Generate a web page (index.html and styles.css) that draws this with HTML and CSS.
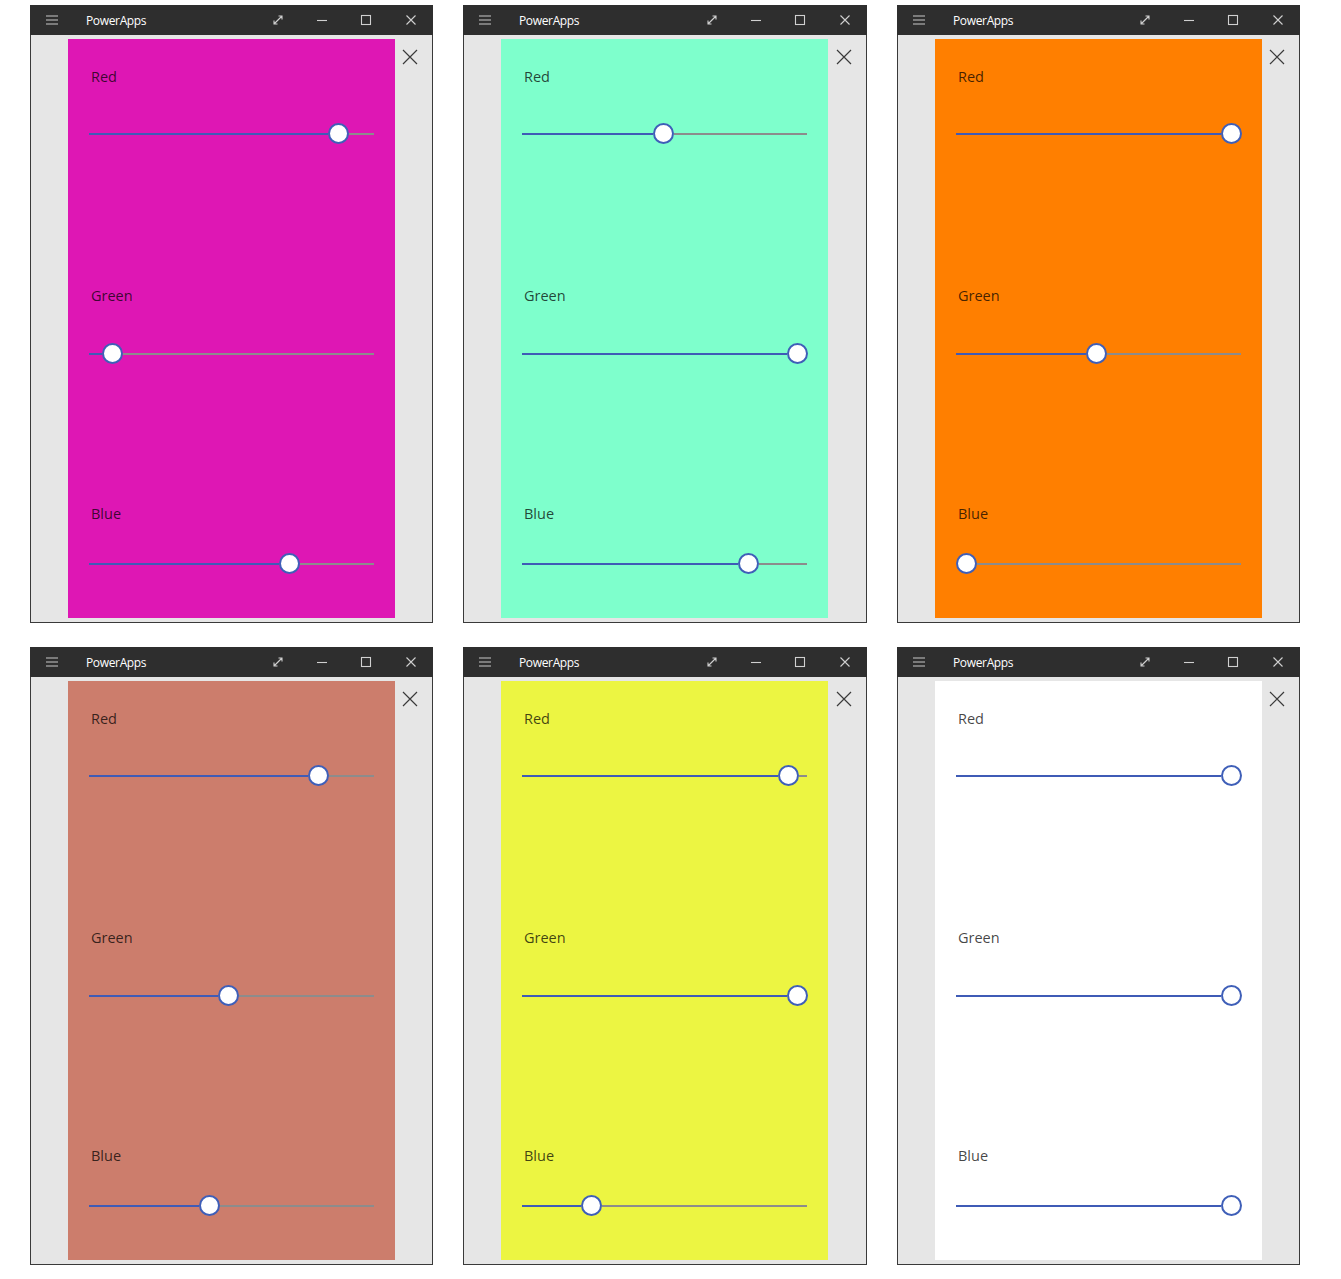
FILE: index.html
```html
<!DOCTYPE html>
<html>
<head>
<meta charset="utf-8">
<link rel="stylesheet" href="styles.css">
</head>
<body>
<div class="grid">

<div class="win">
  <div class="titlebar">
    <div class="tb-btn"><svg width="14" height="12" viewBox="0 0 14 12"><path d="M1 2h12M1 6h12M1 10h12" stroke="#c8c8c8" stroke-width="1.2"/></svg></div>
    <div class="tb-title">PowerApps</div>
    <div class="tb-spacer"></div>
    <div class="tb-btn"><svg width="12" height="12" viewBox="0 0 12 12"><path d="M2 10L10 2M6.5 2H10V5.5M2 6.5V10H5.5" stroke="#d0d0d0" stroke-width="1.1" fill="none"/></svg></div>
    <div class="tb-btn"><svg width="12" height="12" viewBox="0 0 12 12"><path d="M1 6.5h10" stroke="#d0d0d0" stroke-width="1.1"/></svg></div>
    <div class="tb-btn"><svg width="12" height="12" viewBox="0 0 12 12"><rect x="1.5" y="1.5" width="9" height="9" stroke="#d0d0d0" stroke-width="1.1" fill="none"/></svg></div>
    <div class="tb-btn"><svg width="12" height="12" viewBox="0 0 12 12"><path d="M1.5 1.5L10.5 10.5M10.5 1.5L1.5 10.5" stroke="#d0d0d0" stroke-width="1.1"/></svg></div>
  </div>
  <div class="content">
    <div class="panel c1">
      <div class="label l-red">Red</div>
      <div class="slider s-red"><span class="fill" style="width:239px"></span><span class="thumb"></span><span class="rest"></span></div>
      <div class="label l-green">Green</div>
      <div class="slider s-green"><span class="fill" style="width:13px"></span><span class="thumb"></span><span class="rest"></span></div>
      <div class="label l-blue">Blue</div>
      <div class="slider s-blue"><span class="fill" style="width:190px"></span><span class="thumb"></span><span class="rest"></span></div>
    </div>
    <div class="side"><svg width="16" height="16" viewBox="0 0 16 16"><path d="M1 1L15 15M15 1L1 15" stroke="#3a3a3a" stroke-width="1.2"/></svg></div>
  </div>
</div>

<div class="win">
  <div class="titlebar">
    <div class="tb-btn"><svg width="14" height="12" viewBox="0 0 14 12"><path d="M1 2h12M1 6h12M1 10h12" stroke="#c8c8c8" stroke-width="1.2"/></svg></div>
    <div class="tb-title">PowerApps</div>
    <div class="tb-spacer"></div>
    <div class="tb-btn"><svg width="12" height="12" viewBox="0 0 12 12"><path d="M2 10L10 2M6.5 2H10V5.5M2 6.5V10H5.5" stroke="#d0d0d0" stroke-width="1.1" fill="none"/></svg></div>
    <div class="tb-btn"><svg width="12" height="12" viewBox="0 0 12 12"><path d="M1 6.5h10" stroke="#d0d0d0" stroke-width="1.1"/></svg></div>
    <div class="tb-btn"><svg width="12" height="12" viewBox="0 0 12 12"><rect x="1.5" y="1.5" width="9" height="9" stroke="#d0d0d0" stroke-width="1.1" fill="none"/></svg></div>
    <div class="tb-btn"><svg width="12" height="12" viewBox="0 0 12 12"><path d="M1.5 1.5L10.5 10.5M10.5 1.5L1.5 10.5" stroke="#d0d0d0" stroke-width="1.1"/></svg></div>
  </div>
  <div class="content">
    <div class="panel c2">
      <div class="label l-red">Red</div>
      <div class="slider s-red"><span class="fill" style="width:131px"></span><span class="thumb"></span><span class="rest"></span></div>
      <div class="label l-green">Green</div>
      <div class="slider s-green"><span class="fill" style="width:265px"></span><span class="thumb"></span><span class="rest"></span></div>
      <div class="label l-blue">Blue</div>
      <div class="slider s-blue"><span class="fill" style="width:216px"></span><span class="thumb"></span><span class="rest"></span></div>
    </div>
    <div class="side"><svg width="16" height="16" viewBox="0 0 16 16"><path d="M1 1L15 15M15 1L1 15" stroke="#3a3a3a" stroke-width="1.2"/></svg></div>
  </div>
</div>

<div class="win">
  <div class="titlebar">
    <div class="tb-btn"><svg width="14" height="12" viewBox="0 0 14 12"><path d="M1 2h12M1 6h12M1 10h12" stroke="#c8c8c8" stroke-width="1.2"/></svg></div>
    <div class="tb-title">PowerApps</div>
    <div class="tb-spacer"></div>
    <div class="tb-btn"><svg width="12" height="12" viewBox="0 0 12 12"><path d="M2 10L10 2M6.5 2H10V5.5M2 6.5V10H5.5" stroke="#d0d0d0" stroke-width="1.1" fill="none"/></svg></div>
    <div class="tb-btn"><svg width="12" height="12" viewBox="0 0 12 12"><path d="M1 6.5h10" stroke="#d0d0d0" stroke-width="1.1"/></svg></div>
    <div class="tb-btn"><svg width="12" height="12" viewBox="0 0 12 12"><rect x="1.5" y="1.5" width="9" height="9" stroke="#d0d0d0" stroke-width="1.1" fill="none"/></svg></div>
    <div class="tb-btn"><svg width="12" height="12" viewBox="0 0 12 12"><path d="M1.5 1.5L10.5 10.5M10.5 1.5L1.5 10.5" stroke="#d0d0d0" stroke-width="1.1"/></svg></div>
  </div>
  <div class="content">
    <div class="panel c3">
      <div class="label l-red">Red</div>
      <div class="slider s-red"><span class="fill" style="width:265px"></span><span class="thumb"></span><span class="rest"></span></div>
      <div class="label l-green">Green</div>
      <div class="slider s-green"><span class="fill" style="width:130px"></span><span class="thumb"></span><span class="rest"></span></div>
      <div class="label l-blue">Blue</div>
      <div class="slider s-blue"><span class="fill" style="width:0px"></span><span class="thumb"></span><span class="rest"></span></div>
    </div>
    <div class="side"><svg width="16" height="16" viewBox="0 0 16 16"><path d="M1 1L15 15M15 1L1 15" stroke="#3a3a3a" stroke-width="1.2"/></svg></div>
  </div>
</div>

<div class="win">
  <div class="titlebar">
    <div class="tb-btn"><svg width="14" height="12" viewBox="0 0 14 12"><path d="M1 2h12M1 6h12M1 10h12" stroke="#c8c8c8" stroke-width="1.2"/></svg></div>
    <div class="tb-title">PowerApps</div>
    <div class="tb-spacer"></div>
    <div class="tb-btn"><svg width="12" height="12" viewBox="0 0 12 12"><path d="M2 10L10 2M6.5 2H10V5.5M2 6.5V10H5.5" stroke="#d0d0d0" stroke-width="1.1" fill="none"/></svg></div>
    <div class="tb-btn"><svg width="12" height="12" viewBox="0 0 12 12"><path d="M1 6.5h10" stroke="#d0d0d0" stroke-width="1.1"/></svg></div>
    <div class="tb-btn"><svg width="12" height="12" viewBox="0 0 12 12"><rect x="1.5" y="1.5" width="9" height="9" stroke="#d0d0d0" stroke-width="1.1" fill="none"/></svg></div>
    <div class="tb-btn"><svg width="12" height="12" viewBox="0 0 12 12"><path d="M1.5 1.5L10.5 10.5M10.5 1.5L1.5 10.5" stroke="#d0d0d0" stroke-width="1.1"/></svg></div>
  </div>
  <div class="content">
    <div class="panel c4">
      <div class="label l-red">Red</div>
      <div class="slider s-red"><span class="fill" style="width:219px"></span><span class="thumb"></span><span class="rest"></span></div>
      <div class="label l-green">Green</div>
      <div class="slider s-green"><span class="fill" style="width:129px"></span><span class="thumb"></span><span class="rest"></span></div>
      <div class="label l-blue">Blue</div>
      <div class="slider s-blue"><span class="fill" style="width:110px"></span><span class="thumb"></span><span class="rest"></span></div>
    </div>
    <div class="side"><svg width="16" height="16" viewBox="0 0 16 16"><path d="M1 1L15 15M15 1L1 15" stroke="#3a3a3a" stroke-width="1.2"/></svg></div>
  </div>
</div>

<div class="win">
  <div class="titlebar">
    <div class="tb-btn"><svg width="14" height="12" viewBox="0 0 14 12"><path d="M1 2h12M1 6h12M1 10h12" stroke="#c8c8c8" stroke-width="1.2"/></svg></div>
    <div class="tb-title">PowerApps</div>
    <div class="tb-spacer"></div>
    <div class="tb-btn"><svg width="12" height="12" viewBox="0 0 12 12"><path d="M2 10L10 2M6.5 2H10V5.5M2 6.5V10H5.5" stroke="#d0d0d0" stroke-width="1.1" fill="none"/></svg></div>
    <div class="tb-btn"><svg width="12" height="12" viewBox="0 0 12 12"><path d="M1 6.5h10" stroke="#d0d0d0" stroke-width="1.1"/></svg></div>
    <div class="tb-btn"><svg width="12" height="12" viewBox="0 0 12 12"><rect x="1.5" y="1.5" width="9" height="9" stroke="#d0d0d0" stroke-width="1.1" fill="none"/></svg></div>
    <div class="tb-btn"><svg width="12" height="12" viewBox="0 0 12 12"><path d="M1.5 1.5L10.5 10.5M10.5 1.5L1.5 10.5" stroke="#d0d0d0" stroke-width="1.1"/></svg></div>
  </div>
  <div class="content">
    <div class="panel c5">
      <div class="label l-red">Red</div>
      <div class="slider s-red"><span class="fill" style="width:256px"></span><span class="thumb"></span><span class="rest"></span></div>
      <div class="label l-green">Green</div>
      <div class="slider s-green"><span class="fill" style="width:265px"></span><span class="thumb"></span><span class="rest"></span></div>
      <div class="label l-blue">Blue</div>
      <div class="slider s-blue"><span class="fill" style="width:59px"></span><span class="thumb"></span><span class="rest"></span></div>
    </div>
    <div class="side"><svg width="16" height="16" viewBox="0 0 16 16"><path d="M1 1L15 15M15 1L1 15" stroke="#3a3a3a" stroke-width="1.2"/></svg></div>
  </div>
</div>

<div class="win">
  <div class="titlebar">
    <div class="tb-btn"><svg width="14" height="12" viewBox="0 0 14 12"><path d="M1 2h12M1 6h12M1 10h12" stroke="#c8c8c8" stroke-width="1.2"/></svg></div>
    <div class="tb-title">PowerApps</div>
    <div class="tb-spacer"></div>
    <div class="tb-btn"><svg width="12" height="12" viewBox="0 0 12 12"><path d="M2 10L10 2M6.5 2H10V5.5M2 6.5V10H5.5" stroke="#d0d0d0" stroke-width="1.1" fill="none"/></svg></div>
    <div class="tb-btn"><svg width="12" height="12" viewBox="0 0 12 12"><path d="M1 6.5h10" stroke="#d0d0d0" stroke-width="1.1"/></svg></div>
    <div class="tb-btn"><svg width="12" height="12" viewBox="0 0 12 12"><rect x="1.5" y="1.5" width="9" height="9" stroke="#d0d0d0" stroke-width="1.1" fill="none"/></svg></div>
    <div class="tb-btn"><svg width="12" height="12" viewBox="0 0 12 12"><path d="M1.5 1.5L10.5 10.5M10.5 1.5L1.5 10.5" stroke="#d0d0d0" stroke-width="1.1"/></svg></div>
  </div>
  <div class="content">
    <div class="panel c6">
      <div class="label l-red">Red</div>
      <div class="slider s-red"><span class="fill" style="width:265px"></span><span class="thumb"></span><span class="rest"></span></div>
      <div class="label l-green">Green</div>
      <div class="slider s-green"><span class="fill" style="width:265px"></span><span class="thumb"></span><span class="rest"></span></div>
      <div class="label l-blue">Blue</div>
      <div class="slider s-blue"><span class="fill" style="width:265px"></span><span class="thumb"></span><span class="rest"></span></div>
    </div>
    <div class="side"><svg width="16" height="16" viewBox="0 0 16 16"><path d="M1 1L15 15M15 1L1 15" stroke="#3a3a3a" stroke-width="1.2"/></svg></div>
  </div>
</div>

</div>
</body>
</html>
```

FILE: styles.css
```css
html, body {
  margin: 0;
  padding: 0;
  background: #ffffff;
}

.grid {
  display: grid;
  grid-template-columns: 403px 404px 403px;
  column-gap: 30px;
  row-gap: 24px;
  padding: 5px 0 0 30px;
}

.win {
  height: 618px;
  box-sizing: border-box;
  border: 1px solid #3a3a3a;
  border-top: none;
  display: flex;
  flex-direction: column;
  background: #e6e6e6;
}

.titlebar {
  height: 30px;
  flex: none;
  background: #2e2e2e;
  margin: 0 -1px;
  display: flex;
  align-items: center;
  color: #ffffff;
  font-family: "Open Sans", "Noto Sans", sans-serif;
  font-size: 12px;
}

.tb-btn {
  width: 44px;
  height: 30px;
  display: flex;
  align-items: center;
  justify-content: center;
  flex: none;
}

.tb-btn:last-child {
  width: 45px;
}

.tb-title {
  margin-left: 12px;
  letter-spacing: -0.35px;
}

.tb-spacer {
  flex: 1;
}

.content {
  flex: 1;
  display: flex;
  padding: 4px 0 4px 37px;
}

.panel {
  width: 327px;
  flex: none;
  box-sizing: border-box;
  padding-top: 28px;
  font-family: "Open Sans", "Noto Sans", sans-serif;
}

.side {
  flex: 1;
  display: flex;
  justify-content: center;
  padding-top: 10px;
  padding-right: 7px;
  align-items: flex-start;
}

.c1 { background: #de17b4; }
.c2 { background: #7effcc; }
.c3 { background: #ff7f00; }
.c4 { background: #cc7d6c; }
.c5 { background: #ecf542; }
.c6 { background: #ffffff; }

.label {
  height: 20px;
  line-height: 20px;
  margin-left: 23px;
  font-size: 14.5px;
  color: rgba(0, 0, 0, 0.74);
}

.l-green { margin-top: 142px; }
.l-blue { margin-top: 140px; }

.slider {
  width: 285px;
  height: 21px;
  margin-left: 21px;
  display: flex;
  align-items: center;
}

.s-red { margin-top: 36px; }
.s-green { margin-top: 37px; }
.s-blue { margin-top: 29px; }

.fill {
  height: 2px;
  background: #3f5bb6;
  flex: none;
}

.rest {
  height: 2px;
  flex: 1;
  background: #8c8c8c;
}

.thumb {
  width: 21px;
  height: 21px;
  flex: none;
  box-sizing: border-box;
  border: 2px solid #3f5fb8;
  border-radius: 50%;
  background: #ffffff;
}
```
